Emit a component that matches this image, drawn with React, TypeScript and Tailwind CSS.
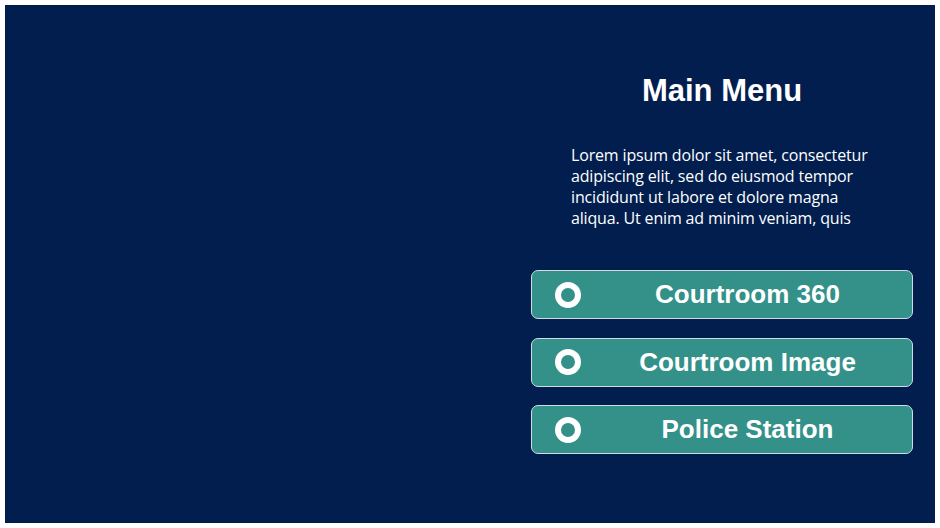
import React from "react";

const items = ["Courtroom 360", "Courtroom Image", "Police Station"];

export default function App() {
  return (
    <div className="h-[528px] w-[940px] bg-white p-[5px]">
      <div className="flex h-full w-full bg-[#011e4e]">
        <div className="flex-1" />

        <div className="mr-[22px] flex w-[382px] flex-col pt-[68px]">
          <h1 className="text-center text-[31px] leading-[36px] font-bold text-white [font-family:'Liberation_Sans',Arial,sans-serif]">
            Main Menu
          </h1>

          <p className="mt-[36px] ml-[40px] w-[302px] text-[16px] leading-[21px] tracking-[-0.01em] text-white [font-family:'Open_Sans',sans-serif]">
            Lorem ipsum dolor sit amet, consectetur adipiscing elit, sed do
            eiusmod tempor incididunt ut labore et dolore magna aliqua. Ut enim
            ad minim veniam, quis
          </p>

          <div className="mt-[41px] flex flex-col gap-[18.5px]">
            {items.map((label) => (
              <button
                key={label}
                className="flex h-[49px] w-full items-center rounded-[7px] border border-[#cfdde3] bg-[#33918a] pl-[23px] text-white"
              >
                <span className="h-[26px] w-[26px] shrink-0 rounded-full border-[6px] border-white bg-[#33918a]" />
                <span className="flex-1 pl-[2px] text-center text-[26px] font-bold [font-family:'Liberation_Sans',Arial,sans-serif]">
                  {label}
                </span>
              </button>
            ))}
          </div>
        </div>
      </div>
    </div>
  );
}
